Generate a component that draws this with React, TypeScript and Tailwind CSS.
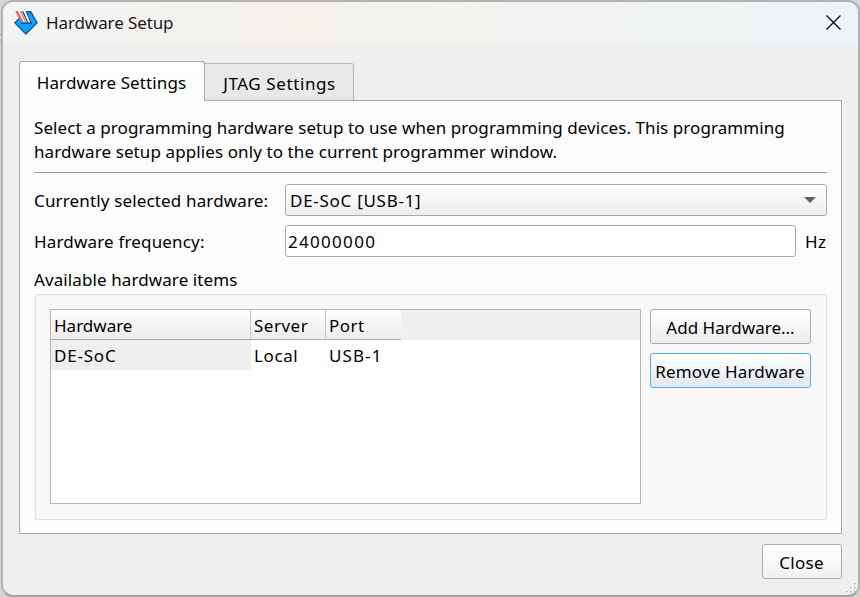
import React from "react";

const HEADER = "bg-linear-to-b from-white to-[#ececec]";
const BUTTON =
  "flex items-center justify-center rounded-[3px] border whitespace-nowrap h-[35px]";

function AppIcon() {
  return (
    <svg width="24" height="24" viewBox="0 0 24 24">
      <path d="M5.2 7.6 .9 11.8 11.9 23 23.1 11.8 16.8 .8H12z" fill="#08a4f5" stroke="#1557ad" strokeWidth="1.4" strokeLinejoin="round" />
      <path d="M1.2 0h11.4l5.2 12H8z" fill="#fbfcff" />
      <path d="M2.4 0 8.4 11" fill="none" stroke="#f0605a" strokeWidth="2.4" />
      <path d="M6.4 0 11.6 11" fill="none" stroke="#ee6d68" strokeWidth="1.2" />
      <path d="M8.6 0 13.6 11.4" fill="none" stroke="#1450a3" strokeWidth="1.3" />
      <path d="M12.2 0 17.2 12" fill="none" stroke="#1450a3" strokeWidth="1.3" />
      <path d="M7 12.1h11" fill="none" stroke="#1450a3" strokeWidth="1.6" />
    </svg>
  );
}

function ResizeGrip() {
  const dots = [[8, 0], [4, 4], [8, 4], [0, 8], [4, 8], [8, 8]];
  return (
    <svg className="absolute right-[3px] bottom-[3px]" width="11" height="11">
      {dots.map(([x, y]) => (
        <rect key={`${x}-${y}`} x={x} y={y} width="1.3" height="1.3" fill="#aaa" />
      ))}
    </svg>
  );
}

export default function App() {
  return (
    <div className="relative h-[597px] w-[860px] overflow-hidden bg-[#d5d5d5] pl-px font-['Noto_Sans',sans-serif] text-[17px] leading-6 text-black">
      <span className="absolute top-[34px] left-0 h-2 w-px border-y border-[#999]" />
      <div className="h-[597px] w-[859px] overflow-hidden rounded-[12px] border-2 border-[#b3b3b3] border-b-[#a2a2a2] bg-[#efefef]">
        <header className="flex h-[43px] items-center bg-linear-to-r from-[#f3f3f3] via-[#f5f2ec] via-35% to-[#edf4f7] pr-[16px] pb-[2px] pl-[11px]">
          <AppIcon />
          <h1 className="ml-[8px] flex-1 text-[17px] tracking-[-0.1px] whitespace-nowrap text-[#191919]">Hardware Setup</h1>
          <svg width="17" height="17" viewBox="0 0 17 17">
            <path d="M1.5 1.5l14 14M15.5 1.5l-14 14" stroke="#111" strokeWidth="1.4" />
          </svg>
        </header>

        <main className="px-[16px] pt-4">
          <div className="relative z-10 -mb-px flex items-end" role="tablist">
            <div className="flex h-10 w-[186px] items-center justify-center rounded-t-[3px] border border-b-0 border-[#aaa] bg-linear-to-b from-white to-[#fcfcfc] pt-[3px] pr-px tracking-[0.12px] whitespace-nowrap">
              Hardware Settings
            </div>
            <div className="flex h-[38px] w-[149px] items-center justify-center rounded-tr-[3px] border border-l-0 border-[#b7b7b7] bg-linear-to-b from-[#e9e9e9] from-90% to-[#dddddd] pt-[3px] pl-px tracking-[0.6px] whitespace-nowrap">
              JTAG Settings
            </div>
          </div>

          <section className="h-[434px] border border-[#a9a9a9] bg-[#fcfcfc] px-[14px] pt-[15px]">
            <p className="h-[57px] border-b border-[#999] tracking-[0.075px] whitespace-nowrap">
              Select a programming hardware setup to use when programming devices. This programming
              <br />
              <span className="tracking-[0.1px]">hardware setup applies only to the current programmer window.</span>
            </p>

            <div className="mt-[11px] flex h-8 items-center">
              <span className="w-[251px] pt-px tracking-[0.15px] whitespace-nowrap">Currently selected hardware:</span>
              <div className="flex h-8 flex-1 items-center justify-between rounded-[3px] border border-[#a9a9a9] bg-linear-to-b from-white to-[#ededed] pr-[10px] pl-1">
                <span className="pt-px tracking-[0.72px]">DE-SoC [USB-1]</span>
                <svg width="12" height="6"><path d="M0 0h12L6 6z" fill="#606060" /></svg>
              </div>
            </div>

            <div className="mt-[9px] flex h-8 items-center">
              <span className="w-[251px] pt-px tracking-[0.17px] whitespace-nowrap">Hardware frequency:</span>
              <div className="flex h-8 w-[511px] items-center rounded-[3px] border border-[#a9a9a9] bg-white pt-px pl-[2px] tracking-[1.3px]">24000000</div>
              <span className="ml-[9px] pt-px tracking-[0.5px]">Hz</span>
            </div>

            <div className="mt-[11px] h-[26px] tracking-[0.1px] whitespace-nowrap">Available hardware items</div>

            <div className="ml-px flex h-[226px] gap-[9px] rounded-[2px] border border-[#dedede] bg-[#f8f8f8] p-[14px]">
              <div className="h-[195px] w-[591px] border border-[#b5b5b5] bg-white">
                <div className="flex h-[30px] bg-[#efefef]">
                  <div className={`w-[200px] border-r border-b border-r-[#c6c6c6] border-b-[#aaa] pt-[4px] pl-[3px] ${HEADER}`}>Hardware</div>
                  <div className={`w-[75px] border-r border-b border-r-[#c6c6c6] border-b-[#aaa] pt-[4px] pl-[3px] tracking-[0.5px] ${HEADER}`}>Server</div>
                  <div className={`w-[75px] border-b border-[#aaa] pt-[4px] pl-[3px] tracking-[0.5px] ${HEADER}`}>Port</div>
                </div>
                <div className="flex h-[30px]">
                  <div className="w-[200px] bg-[#efefef] pt-[4px] pl-[3px] tracking-[0.8px]">DE-SoC</div>
                  <div className="w-[75px] pt-[4px] pl-[3px] tracking-[0.6px]">Local</div>
                  <div className="w-[75px] pt-[4px] pl-[3px] tracking-[1.1px]">USB-1</div>
                </div>
              </div>
              <div className="flex flex-1 flex-col gap-[9px]">
                <button className={`${BUTTON} w-[161px] border-[#ababab] bg-linear-to-b from-white to-[#ededed] pt-[3px]`}>Add Hardware...</button>
                <button className={`${BUTTON} w-[161px] border-[#4faff0] bg-linear-to-b from-white to-[#e2e7ed] pt-[3px] pr-px tracking-[0.15px]`}>Remove Hardware</button>
              </div>
            </div>
          </section>

          <footer className="mt-[10px] flex justify-end">
            <button className={`${BUTTON} w-[80px] border-[#ababab] bg-linear-to-b from-white to-[#f1f1f1] pt-[3px] pr-px tracking-[0.3px]`}>Close</button>
          </footer>
        </main>
      </div>
      <ResizeGrip />
    </div>
  );
}
